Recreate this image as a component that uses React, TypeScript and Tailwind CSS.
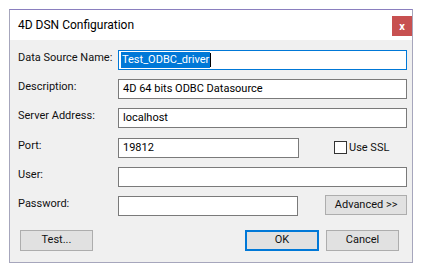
import React from "react";

const Field = ({
  value,
  width = "w-[289px]",
}: {
  value?: string;
  width?: string;
}) => (
  <div
    className={`${width} h-[20px] border border-[#7a7a7a] bg-white pl-[4px] flex items-center text-black`}
  >
    {value}
  </div>
);

const Row = ({ label, children }: { label: string; children: React.ReactNode }) => (
  <div className="flex items-start h-[20px]">
    <div className="w-[100px] -mt-[2px] leading-[20px] whitespace-nowrap">{label}</div>
    {children}
  </div>
);

const Button = ({
  label,
  width,
  focused,
}: {
  label: string;
  width: string;
  focused?: boolean;
}) => (
  <button
    className={`${width} h-[21px] bg-[#e1e1e1] flex items-center justify-center ${
      focused ? "border-2 border-[#0078d7]" : "border border-[#adadad]"
    }`}
  >
    {label}
  </button>
);

export default function App() {
  return (
    <div className="w-[423px] h-[274px] bg-white pt-[9px] pl-[9px] font-['Roboto',sans-serif] text-[11px] text-[#111]">
      <div className="w-[404px] h-[254px] border border-[#a6a6bc] border-t-[#8a7fbf] bg-[#f0f0f0] flex flex-col">
        <div className="h-[30px] bg-white flex items-center pl-[8px]">
          <span className="text-[12px] text-black flex-1 -mt-[1px]">4D DSN Configuration</span>
          <div className="w-[20px] h-[20px] bg-[#c75050] text-white font-bold text-[11px] flex items-center justify-center leading-none mt-[2px]">
            x
          </div>
        </div>
        <div className="flex flex-col pl-[8px] pr-[5px] pt-[10px] gap-[9px]">
          <Row label="Data Source Name:">
            <div className="w-[289px] h-[20px] border border-[#0078d7] bg-white pl-[2px] flex items-center">
              <span className="bg-[#0078d7] text-white px-[1px] leading-[16px]">Test_ODBC_driver</span>
              <span className="w-px h-[14px] bg-black" />
            </div>
          </Row>
          <Row label="Description:">
            <Field value="4D 64 bits ODBC Datasource" />
          </Row>
          <Row label="Server Address:">
            <Field value="localhost" />
          </Row>
          <div className="flex items-start h-[20px] mt-[1px]">
            <div className="w-[100px] -mt-[2px] leading-[20px]">Port:</div>
            <Field value="19812" width="w-[181px]" />
            <div className="ml-[35px] mt-[3px] flex items-center gap-[2px]">
              <div className="w-[13px] h-[13px] border border-[#333] bg-white" />
              <span className="leading-[13px]">Use SSL</span>
            </div>
          </div>
          <Row label="User:">
            <Field />
          </Row>
          <div className="flex items-start h-[20px]">
            <div className="w-[100px] -mt-[2px] leading-[20px]">Password:</div>
            <Field width="w-[181px]" />
            <div className="ml-[27px] w-[82px] h-[20px] -mt-[1px] bg-[#e1e1e1] border border-[#adadad] flex items-center justify-center">
              Advanced &gt;&gt;
            </div>
          </div>
          <div className="flex mt-[5px] pl-[2px]">
            <Button label="Test..." width="w-[73px]" />
            <div className="ml-[152px]">
              <Button label="OK" width="w-[74px]" focused />
            </div>
            <div className="ml-[7px]">
              <Button label="Cancel" width="w-[73px]" />
            </div>
          </div>
        </div>
      </div>
    </div>
  );
}
